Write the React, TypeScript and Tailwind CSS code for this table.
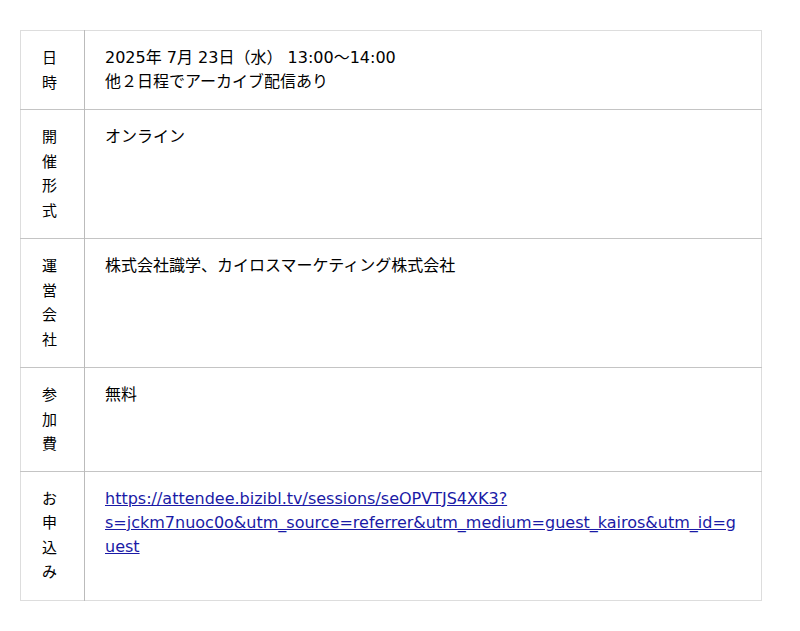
import React from 'react';

const rows: { label: string; content: React.ReactNode }[] = [
  {
    label: '日時',
    content: (
      <>
        2025年 7月 23日（水） 13:00〜14:00
        <br />
        他２日程でアーカイブ配信あり
      </>
    ),
  },
  { label: '開催形式', content: 'オンライン' },
  { label: '運営会社', content: '株式会社識学、カイロスマーケティング株式会社' },
  { label: '参加費', content: '無料' },
  {
    label: 'お申込み',
    content: (
      <a
        href="#"
        className="text-[#1a1aa6] underline break-words"
      >
        https://attendee.bizibl.tv/sessions/seOPVTJS4XK3?s=jckm7nuoc0o&amp;utm_source=referrer&amp;utm_medium=guest_kairos&amp;utm_id=guest
      </a>
    ),
  },
];

export default function App() {
  return (
    <div className="min-h-[631px] bg-white px-[20px] pt-[30px] text-black [font-family:'DejaVu_Sans','Noto_Sans_CJK_JP',sans-serif]">
      <table className="w-[742px] border-collapse border border-[#dddddd] table-fixed">
        <colgroup>
          <col className="w-[64px]" />
          <col />
        </colgroup>
        <tbody>
          {rows.map((row, i) => (
            <tr key={i} className={i < rows.length - 1 ? 'border-b border-[#c4c4c4]' : ''}>
              <td className={`align-top border-r border-[#bbbbbb] pl-[21px] pr-[19px] text-[15px] leading-[24.5px] pt-[15px] ${i === 0 || i === 3 ? 'pb-[14px]' : 'pb-[15px]'}`}>
                {row.label}
              </td>
              <td className="align-top px-[20px] py-[15px] text-[16px] leading-[24px]">
                {row.content}
              </td>
            </tr>
          ))}
        </tbody>
      </table>
    </div>
  );
}
